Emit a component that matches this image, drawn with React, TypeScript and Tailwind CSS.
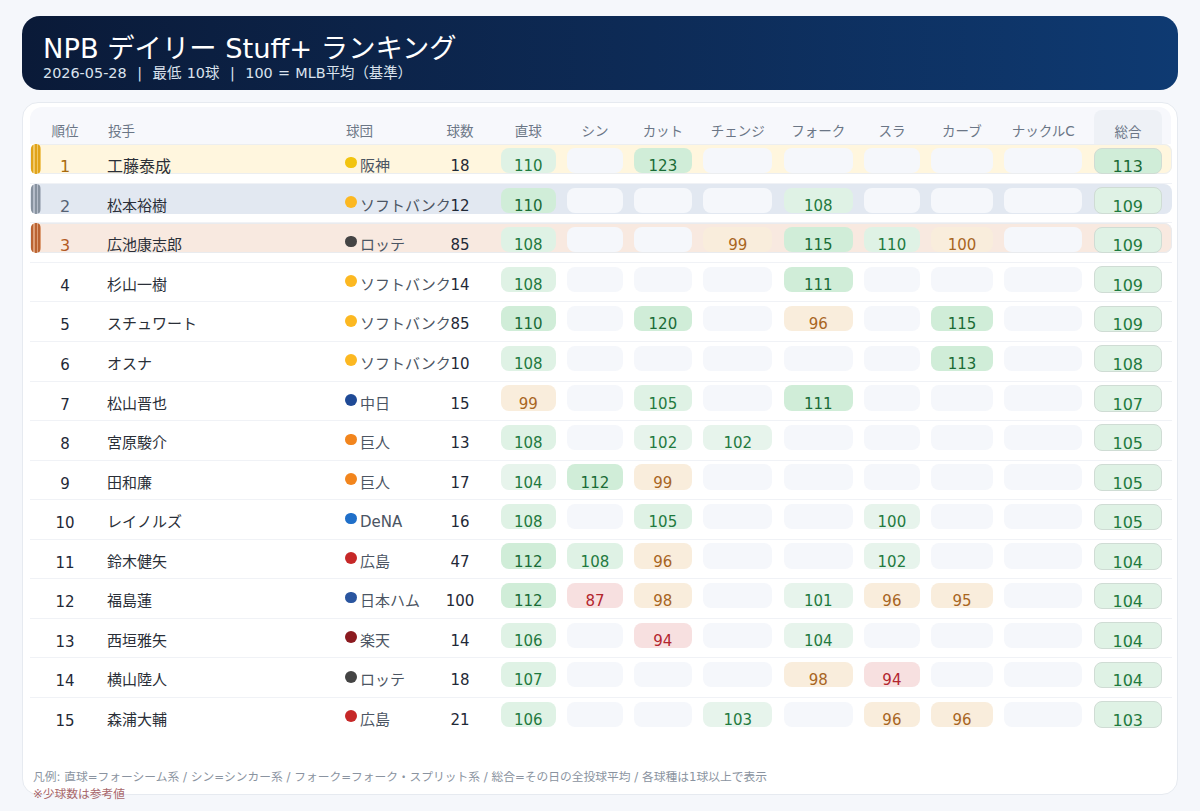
const font = "font-['DejaVu_Sans','Noto_Sans_CJK_JP',sans-serif]"

const pitchHeaders = [
  { label: '直球', w: 'w-[55.3px]' },
  { label: 'シン', w: 'w-[55.3px]' },
  { label: 'カット', w: 'w-[58px]' },
  { label: 'チェンジ', w: 'w-[69.3px]' },
  { label: 'フォーク', w: 'w-[69px]' },
  { label: 'スラ', w: 'w-[55.7px]' },
  { label: 'カーブ', w: 'w-[61.8px]' },
  { label: 'ナックルC', w: 'w-[78.3px]' },
]

type Row = {
  rank: number
  name: string
  dot: string
  team: string
  count: number
  vals: (number | null)[]
  total: number
}

const rows: Row[] = [
  { rank: 1, name: '工藤泰成', dot: 'bg-[#f2c40f]', team: '阪神', count: 18, vals: [109.6, null, 123, null, null, null, null, null], total: 113 },
  { rank: 2, name: '松本裕樹', dot: 'bg-[#fcb821]', team: 'ソフトバンク', count: 12, vals: [110, null, null, null, 108, null, null, null], total: 109 },
  { rank: 3, name: '広池康志郎', dot: 'bg-[#444444]', team: 'ロッテ', count: 85, vals: [108, null, null, 99, 115, 109.6, 99.7, null], total: 109 },
  { rank: 4, name: '杉山一樹', dot: 'bg-[#fcb821]', team: 'ソフトバンク', count: 14, vals: [108, null, null, null, 111, null, null, null], total: 109 },
  { rank: 5, name: 'スチュワート', dot: 'bg-[#fcb821]', team: 'ソフトバンク', count: 85, vals: [110, null, 120, null, 96, null, 115, null], total: 109 },
  { rank: 6, name: 'オスナ', dot: 'bg-[#fcb821]', team: 'ソフトバンク', count: 10, vals: [108, null, null, null, null, null, 113, null], total: 108 },
  { rank: 7, name: '松山晋也', dot: 'bg-[#1f4a96]', team: '中日', count: 15, vals: [99, null, 105, null, 111, null, null, null], total: 107 },
  { rank: 8, name: '宮原駿介', dot: 'bg-[#f2851d]', team: '巨人', count: 13, vals: [108, null, 102, 102, null, null, null, null], total: 105 },
  { rank: 9, name: '田和廉', dot: 'bg-[#f2851d]', team: '巨人', count: 17, vals: [104, 112, 99, null, null, null, null, null], total: 105 },
  { rank: 10, name: 'レイノルズ', dot: 'bg-[#1f6fc9]', team: 'DeNA', count: 16, vals: [108, null, 105, null, null, 100.4, null, null], total: 105 },
  { rank: 11, name: '鈴木健矢', dot: 'bg-[#c62828]', team: '広島', count: 47, vals: [112, 108, 96, null, null, 102, null, null], total: 104 },
  { rank: 12, name: '福島蓮', dot: 'bg-[#2a559f]', team: '日本ハム', count: 100, vals: [112, 87, 98, null, 101, 96, 95, null], total: 104 },
  { rank: 13, name: '西垣雅矢', dot: 'bg-[#8b1a1f]', team: '楽天', count: 14, vals: [106, null, 94, null, 104, null, null, null], total: 104 },
  { rank: 14, name: '横山陸人', dot: 'bg-[#444444]', team: 'ロッテ', count: 18, vals: [107, null, null, null, 98, 94, null, null], total: 104 },
  { rank: 15, name: '森浦大輔', dot: 'bg-[#c62828]', team: '広島', count: 21, vals: [106, null, null, 103, null, 96, 96, null], total: 103 },
]

const rowStyles: Record<number, { row: string; rank: string; bar: string; stripe: string }> = {
  1: { row: 'bg-[#fff6de] shadow-[inset_0_0_0_1px_#eceef0] rounded-lg', rank: 'text-[#a86a0c]', bar: 'bg-[#f0c765]', stripe: 'bg-[#e0a31a]' },
  2: { row: 'bg-[#e2e8f1] rounded-lg', rank: 'text-[#566173]', bar: 'bg-[#b4bcc9]', stripe: 'bg-[#87929f]' },
  3: { row: 'bg-[#f8e9e0] shadow-[inset_0_0_0_1px_#e9ebee] rounded-lg', rank: 'text-[#b25a24]', bar: 'bg-[#dc9d76]', stripe: 'bg-[#ba6332]' },
}

function pillColor(v: number | null) {
  if (v === null) return 'bg-[#f5f7fb]'
  if (v >= 110) return 'bg-[#d0edd8] text-[#1a6b36]'
  if (v >= 105) return 'bg-[#dff2e5] text-[#1f7a3f]'
  if (v >= 100) return 'bg-[#e7f4ec] text-[#1f7a3f]'
  if (v >= 95) return 'bg-[#f9eddc] text-[#a8651f]'
  return 'bg-[#f7e0e0] text-[#b3262e]'
}

const App = () => {
  return (
    <div className={`${font} h-[811px] w-[1200px] overflow-hidden bg-[#f5f7fb] px-[22px] pt-4`}>
      {/* header */}
      <div className="h-[73.5px] rounded-[18px] bg-gradient-to-r from-[#0a1a38] to-[#0e3a72] pl-[21px] pt-[16px] text-white">
        <h1 className="text-[27.3px] leading-[33px] font-normal">NPB デイリー Stuff+ ランキング</h1>
        <p className="mt-[1px] text-[14.4px] leading-[15px] [word-spacing:0.7px] whitespace-pre text-[#dbe3ee]">2026-05-28  |  最低 10球  |  100 = MLB平均（基準）</p>
      </div>

      {/* table card */}
      <div className="relative mt-[12.8px] h-[692.7px] rounded-2xl border border-[#e6eaf0] bg-white pl-[7px] pr-[5px] pt-[4px]">
        <div className="flex h-[37px] w-[1141px] rounded-t-xl bg-[#f7f8fc] text-[13.5px] leading-4 text-[#6b7686]">
          <div className="w-[70px] shrink-0 pt-[16px] text-center">順位</div>
          <div className="w-[245px] shrink-0 pt-[16px] pl-[8px]">投手</div>
          <div className="w-[100px] shrink-0 pt-[16px] pl-[1px]">球団</div>
          <div className="flex w-[30px] shrink-0 justify-center pt-[16px] whitespace-nowrap">球数</div>
          <div className="flex shrink-0 gap-[11.3px] pl-[25.7px]">
            {pitchHeaders.map((h) => (
              <div key={h.label} className={`${h.w} shrink-0 pt-[16px] text-center whitespace-nowrap`}>{h.label}</div>
            ))}
          </div>
          <div className="mt-[3px] ml-[11.3px] h-[34px] w-[68.5px] shrink-0 rounded-t-lg bg-[#eef1f6] pt-[14px] text-center">総合</div>
        </div>

        <div className="flex flex-col">
          {rows.map((r) => {
            const s = rowStyles[r.rank]
            return (
              <div key={r.rank} className={`h-[39.55px] ${r.rank < 15 ? 'border-b border-[#f0f2f6]' : ''}`}>
                <div className={`relative flex h-[30px] w-[1142px] items-end ${s ? s.row : ''}`}>
                  {s && (
                    <span className={`absolute left-[1px] top-0 bottom-0 flex w-[9.5px] justify-between overflow-hidden rounded-md ${s.bar}`}>
                      <span className={`h-full w-[2.4px] ${s.stripe}`} />
                      <span className={`h-full w-[2.4px] ${s.stripe}`} />
                      <span className={`h-full w-[2.4px] ${s.stripe}`} />
                    </span>
                  )}
                  <div className={`w-[70px] shrink-0 text-center leading-[14px] ${s ? `text-[16px] ${s.rank}` : 'text-[15px] text-[#1f2937]'}`}>{r.rank}</div>
                  <div className={`w-[245px] shrink-0 pl-[7px] leading-[15px] text-[#2a2f38] ${r.rank === 1 ? 'text-[16px]' : 'text-[15px]'}`}>{r.name}</div>
                  <div className="relative w-[100px] shrink-0 text-[15px] leading-[16px] whitespace-nowrap text-[#4b5563]">
                    <span className={`absolute left-0 top-[-1.6px] size-[11.7px] rounded-full ${r.dot}`} />
                    <span className="pl-[15px]">{r.team}</span>
                  </div>
                  <div className="flex w-[30px] shrink-0 justify-center text-[15px] leading-[15px] text-[#1f2937]">{r.count}</div>
                  <div className="flex shrink-0 items-end gap-[11.3px] pb-[1px] pl-[25.7px]">
                    {r.vals.map((v, i) => (
                      <div
                        key={i}
                        className={`flex h-[25.3px] shrink-0 items-end justify-center rounded-lg text-[15px] leading-[14px] ${pitchHeaders[i].w} ${pillColor(v)}`}
                      >
                        {v === null ? null : Math.round(v)}
                      </div>
                    ))}
                  </div>
                  <div className={`ml-[11.3px] flex h-[26.7px] w-[68px] shrink-0 items-end justify-center rounded-lg border border-[#cfdcd4] text-[16px] leading-[12px] ${r.total >= 110 ? 'bg-[#d0edd8] text-[#1a6b36]' : 'bg-[#dff2e5] text-[#1f7a3f]'}`}>
                    {r.total}
                  </div>
                </div>
              </div>
            )
          })}
        </div>

        <div className="absolute left-[10px] top-[666px] text-[11.75px] leading-[16px] whitespace-nowrap text-[#8a93a0]">
          凡例: 直球=フォーシーム系 / シン=シンカー系 / フォーク=フォーク・スプリット系 / 総合=その日の全投球平均 / 各球種は1球以上で表示
        </div>
        <div className="absolute left-[10px] top-[683px] text-[11.75px] leading-[16px] text-[#a8676b]">※少球数は参考値</div>
      </div>
    </div>
  )
}

export default App
